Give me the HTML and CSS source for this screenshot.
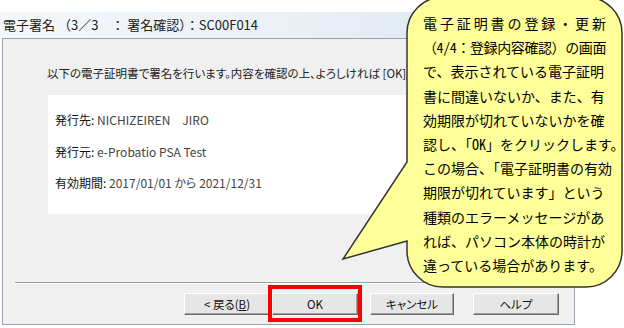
FILE: index.html
```html
<!DOCTYPE html>
<html lang="ja">
<head>
    <meta charset="UTF-8">
    <title>電子署名 - 署名確認</title>
    <link rel="stylesheet" href="styles.css">
</head>
<body>

<div class="screen">
    <div class="window">
        <div class="titlebar">電子署名 （3／3　： 署名確認）：SC00F014</div>
        <div class="panel">
            <p class="message">以下の電子証明書で署名を行います。内容を確認の上、よろしければ [OK]</p>

            <div class="cert">
                <div class="cert-row"><span class="label">発行先:</span> <span class="value">NICHIZEIREN　JIRO</span></div>
                <div class="cert-row"><span class="label">発行元:</span> <span class="value">e-Probatio PSA Test</span></div>
                <div class="cert-row"><span class="label">有効期間:</span> <span class="value">2017/01/01 から 2021/12/31</span></div>
            </div>

            <div class="separator"></div>

            <div class="buttons">
                <button class="btn btn-back">&lt; 戻る(<u>B</u>)</button>
                <button class="btn btn-ok">OK</button>
                <button class="btn btn-cancel">キャンセル</button>
                <button class="btn btn-help">ヘルプ</button>
            </div>
        </div>
    </div>

    <!-- 吹き出し -->
    <svg class="callout-shape" width="624" height="328" viewBox="0 0 624 328">
        <path d="M443,-3 H586 A36,36 0 0 1 622,33 V251 A36,36 0 0 1 586,287 H443 A36,36 0 0 1 407,251 V241 L343,259 L407,162 V33 A36,36 0 0 1 443,-3 Z"
              fill="#ffff99" stroke="#333" stroke-width="1.5"/>
    </svg>
    <div class="callout-text">
        <div class="ln ln-first">電子証明書の登録・更新</div>
        <div class="ln ln-tight">（<span class="hw">4/4</span>：登録内容確認）の画面</div>
        <div class="ln">で、表示されている電子証明</div>
        <div class="ln">書に間違いないか、また、有</div>
        <div class="ln">効期限が切れていないかを確</div>
        <div class="ln">認し、「<span class="hw">OK</span>」をクリックします。</div>
        <div class="ln">この場合、「電子証明書の有効</div>
        <div class="ln">期限が切れています」という</div>
        <div class="ln">種類のエラーメッセージがあ</div>
        <div class="ln">れば、パソコン本体の時計が</div>
        <div class="ln">違っている場合があります。</div>
    </div>
</div>

</body>
</html>
```

FILE: styles.css
```css
body {
    margin: 0;
    background-color: #fff;
    font-family: "Noto Sans CJK JP", "Liberation Sans", sans-serif;
    color: #1a1a1a;
}
.screen {
    position: relative;
    width: 624px;
    height: 328px;
    overflow: hidden;
}
.window {
    width: 575px;
    padding-top: 12px;
}
.titlebar {
    height: 26px;
    line-height: 26px;
    padding-left: 3px;
    font-size: 13px;
    color: #222;
    white-space: nowrap;
    background: linear-gradient(to right, #f5f7fa 0%, #eaf0f6 50%, #d8e3f0 100%);
}
.panel {
    margin-left: 2px;
    width: 571px;
    height: 285px;
    background-color: #f0f0f0;
    border: 1px solid #9aa3ad;
    overflow: hidden;
}
.message {
    margin: 27px 0 0 44px;
    font-size: 11.5px;
    line-height: 14px;
    white-space: nowrap;
    font-feature-settings: "palt";
    color: #222;
}
.cert {
    margin: 15px 0 0 45px;
    width: 480px;
    height: 110px;
    padding: 9px 0 0 7px;
    background-color: #fff;
}
.cert-row {
    height: 31.5px;
    line-height: 31.5px;
    font-size: 12px;
    white-space: nowrap;
    font-feature-settings: "palt";
}
.cert-row .label {
    color: #111;
}
.cert-row .value {
    color: #444;
}
.separator {
    margin: 68px 12px 0 12px;
    height: 1px;
    background-color: #a0a0a0;
    border-bottom: 1px solid #fff;
}
.buttons {
    display: flex;
    margin-top: 9px;
    padding-left: 181px;
}
.btn {
    position: relative;
    height: 22px;
    width: 86px;
    padding: 0;
    font-family: inherit;
    font-size: 11.5px;
    color: #111;
    background-color: #e6e6e6;
    border: 1px solid;
    border-color: #fff #696969 #696969 #fff;
    box-shadow: inset -1px -1px 0 #a0a0a0;
    font-feature-settings: "palt";
}
.btn-ok {
    margin-left: 2px;
}
.btn-ok::after {
    content: "";
    position: absolute;
    top: -9px;
    bottom: -8px;
    left: -5px;
    right: -5px;
    border: 4px solid #ff0000;
}
.btn-cancel {
    margin-left: 12px;
    width: 84px;
}
.btn-help {
    margin-left: 19px;
}
.callout-shape {
    position: absolute;
    left: 0;
    top: 0;
}
.callout-text {
    position: absolute;
    left: 423px;
    top: 11px;
    width: 190px;
    font-size: 14px;
    line-height: 24.2px;
    color: #000;
}
.ln {
    white-space: nowrap;
}
.ln-first {
    letter-spacing: 2.9px;
}
.ln-tight {
    letter-spacing: -0.4px;
}
.hw {
    font-feature-settings: "hwid";
}
```
